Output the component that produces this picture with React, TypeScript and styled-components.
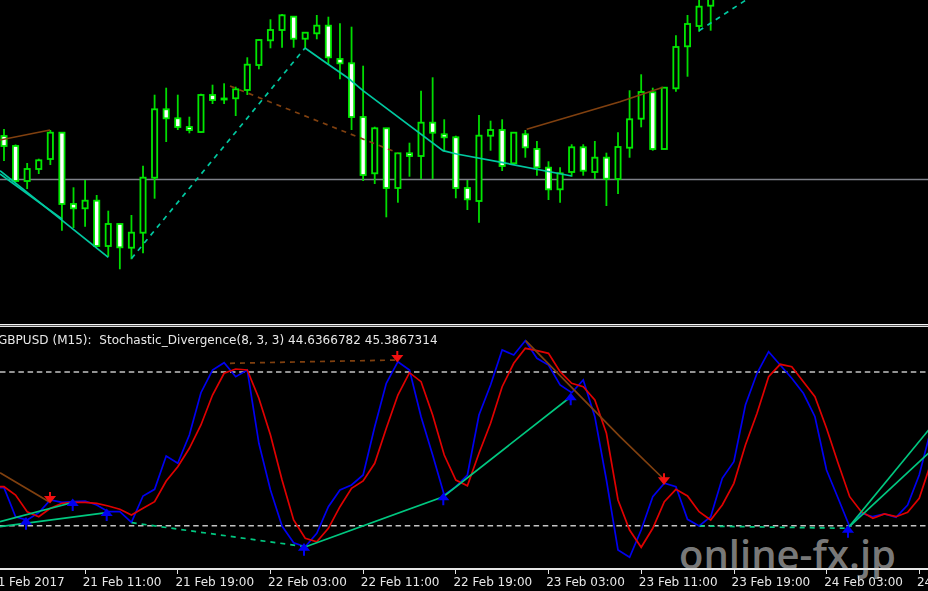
import React, {FC} from 'react';
import styled, {createGlobalStyle} from 'styled-components';

const GlobalStyle = createGlobalStyle`
	html, body {
		margin: 0;
		padding: 0;
		background: #000;
	}
`;

const StyledPage = styled.div`
	position: relative;
	display: flex;
	flex-direction: column;
	width: 928px;
	height: 591px;
	background: #000;
	overflow: hidden;
	font-family: 'DejaVu Sans', Verdana, sans-serif;
`;

const StyledChart = styled.svg`
	display: block;
	width: 928px;
	flex: none;
	filter: blur(0.35px);
`;

const StyledSeparator = styled.div`
	flex: none;
	height: 1px;
	margin-top: 1px;
	border-top: 1px solid #f4f4f4;
	border-bottom: 1px solid #e4e4e4;
	background: #555;
`;

const StyledIndicatorPanel = styled.div`
	position: relative;
	flex: none;
	height: 241px;
`;

const StyledIndicatorLabel = styled.div`
	position: absolute;
	top: 6px;
	left: -2px;
	font-size: 12px;
	line-height: 14px;
	letter-spacing: 0.03px;
	color: #e8e8e8;
	white-space: pre;
	filter: blur(0.3px);
`;

const StyledTimeAxis = styled.div`
	display: flex;
	flex: 1;
	margin-left: -8px;
	border-top: 2px solid #e6e6e6;
`;

const StyledTimeCell = styled.div`
	position: relative;
	flex: none;
	width: 92.7px;
	padding-top: 5px;
	font-size: 12px;
	line-height: 15px;
	color: #e8e8e8;
	white-space: nowrap;
	filter: blur(0.3px);

	&::before {
		content: '';
		position: absolute;
		top: 0;
		left: 0;
		width: 1px;
		height: 4px;
		background: #e6e6e6;
	}

	span {
		margin-left: -2px;
	}
`;

const StyledWatermark = styled.div`
	position: absolute;
	left: 679px;
	top: 529px;
	font-family: 'Open Sans', sans-serif;
	font-size: 40px;
	font-weight: 600;
	line-height: 50px;
	color: rgba(215, 215, 215, 0.58);
	white-space: nowrap;
`;

const StyledWick = styled.line`
	stroke: #00dc00;
	stroke-width: 1.8;
`;

const StyledBody = styled.rect<{$filled: boolean}>`
	fill: ${({$filled}) => ($filled ? '#fff' : '#000')};
	stroke: #00e800;
	stroke-width: 1.8;
`;

const StyledTrend = styled.polyline<{$color: string; $dashed?: boolean; $width?: number}>`
	fill: none;
	stroke: ${({$color}) => $color};
	stroke-width: ${({$width}) => $width ?? 1.7};
	stroke-dasharray: ${({$dashed}) => ($dashed ? '5 5' : 'none')};
`;

const StyledLevel = styled.line<{$color: string; $dashed?: boolean}>`
	stroke: ${({$color}) => $color};
	stroke-width: 1.6;
	stroke-dasharray: ${({$dashed}) => ($dashed ? '5.5 3.7' : 'none')};
`;

const StyledArrow = styled.path<{$color: string}>`
	fill: ${({$color}) => $color};
	stroke: ${({$color}) => $color};
	stroke-width: 2;
`;

const TEAL = '#00c8a0';
const BROWN = '#80400f';
const GREEN = '#00c880';
const BLUE = '#0000f0';
const RED = '#e00000';

const barX = (i: number) => 4 + i * 11.585;

// wick top, body top, body bottom, wick bottom, filled
type Candle = [number, number, number, number, boolean];

const candles: Candle[] = [
	[129, 136, 146, 161, true],
	[144.5, 146, 181, 182, true],
	[163, 169, 181, 189, false],
	[158.7, 160.3, 169, 174, false],
	[130, 132.7, 159, 165, false],
	[132.7, 132.7, 204, 230.7, true],
	[187.3, 204, 208.3, 228, true],
	[180, 200.7, 208.3, 226.7, false],
	[195, 200.7, 246, 246, true],
	[210.7, 224, 246, 256.7, false],
	[224, 224, 247.3, 269.3, true],
	[215, 232.7, 247.7, 259.3, false],
	[165.7, 177.7, 232.7, 253.3, false],
	[94.7, 109.3, 177.7, 198.7, false],
	[87.7, 109.3, 118.3, 142, true],
	[94.7, 118.3, 127, 130, true],
	[116.7, 127, 130, 133.3, true],
	[93.7, 95, 132, 132.7, false],
	[84.7, 95, 100, 104, true],
	[83.3, 98.5, 99.5, 104, true],
	[86.7, 89.3, 98.3, 116, false],
	[57.3, 64.7, 90, 95, false],
	[39.3, 40, 65, 69.3, false],
	[19.3, 30, 40.3, 48.3, false],
	[14, 15.3, 30, 47.7, false],
	[16, 16.7, 38.7, 47.7, true],
	[32.3, 32.7, 38.7, 48.3, false],
	[15, 25.7, 33.3, 39.3, false],
	[16.7, 25.7, 57.3, 65, true],
	[23.3, 59, 63.3, 79.3, true],
	[26.7, 63.3, 117, 130, true],
	[65.7, 117, 175, 181, true],
	[126.7, 128.3, 173.3, 184, false],
	[128.3, 128.3, 188, 217.3, true],
	[152.7, 153.3, 188, 202.7, false],
	[142.7, 153.3, 156, 176.7, true],
	[90.7, 122.7, 156, 179, false],
	[77.3, 122.7, 132.7, 179, true],
	[119.3, 134.3, 137.3, 151.7, true],
	[135.7, 137.3, 188, 198.3, true],
	[180, 188, 199.3, 210, true],
	[115, 135.7, 201, 222.7, false],
	[120.7, 130, 135.7, 150.7, false],
	[119.3, 130, 166, 171, true],
	[132.7, 132.7, 163.3, 165, false],
	[130, 134.3, 147.3, 157.7, true],
	[141, 149, 167.3, 175.7, true],
	[161.3, 167.7, 189.3, 200, true],
	[167.3, 173.3, 189.3, 202.7, false],
	[144.3, 147.3, 172, 176.7, false],
	[144.3, 147.3, 170.7, 175.7, true],
	[141, 157.7, 172, 179, false],
	[152.7, 157.7, 178.7, 206, true],
	[132.3, 147, 179, 194, false],
	[90.3, 119.3, 147.7, 157.7, false],
	[74.3, 92, 118.7, 127.3, false],
	[87.7, 92.3, 149, 150.7, true],
	[87.3, 87.7, 149, 149, false],
	[35.3, 47, 88.3, 91.7, false],
	[15, 24, 46.3, 76.7, false],
	[-5, 6.7, 26, 31.7, false],
	[-10, -5, 5.7, 30.7, false]
];

const mainLine = [
	487.7, 516.7, 520, 512.7, 500, 502.3, 501.7, 501, 505, 511.7, 511.7, 522.3, 496, 489.3,
	456, 463.3, 435, 392.7, 370, 362.7, 376.7, 370, 443.3, 490, 526, 542.7, 546.7, 533.3,
	506.7, 490, 485, 475, 426.7, 383.3, 361.7, 370, 416.7, 455, 495, 486.7, 475, 415,
	385, 350, 355, 340.7, 358.3, 365, 385, 392.7, 380, 416.7, 480, 550, 557.3, 530,
	496.7, 483.3, 486.7, 519.3, 526, 516.7, 478.3, 461.7, 405, 373.3, 351.7, 365, 378.3,
	393.3, 416.7, 470, 498.3, 526.7, 513.3, 516.7, 514, 517.3, 505, 475, 430
];

const signalLine = [
	486.7, 495, 511.7, 516.7, 508.3, 503.3, 502.3, 502.3, 503.3, 506, 509.3, 515, 508.3,
	501.7, 481, 466.7, 448.3, 425, 395, 373.3, 369, 370, 398.3, 435, 480, 520, 538.3,
	541.7, 528.3, 506.7, 488.3, 481, 463.3, 428.3, 395, 372.7, 381.7, 415, 455, 480,
	485.7, 453.3, 423.3, 386.7, 363.3, 348.3, 350.7, 353.3, 371.7, 383.3, 386.7, 400,
	433.3, 500, 530, 547.3, 528.3, 501.7, 489.3, 496, 511.7, 520, 505, 483.3, 445,
	413.3, 376.7, 364.3, 366.7, 381.7, 396.7, 428.3, 463.3, 496.7, 511.7, 518.3, 514,
	516.7, 512.3, 498.3, 463.3
];

const toPoints = (values: number[]) =>
	values.map((y, i) => `${barX(i)},${y}`).join(' ');

const upArrows = [
	[26, 522.7],
	[72.7, 504],
	[106.7, 514],
	[304, 548.7],
	[443.3, 498.3],
	[570.7, 398.3],
	[848, 530.7]
];

const downArrows = [
	[50, 498],
	[397.3, 357],
	[664, 479.3]
];

const timeLabels = [
	'21 Feb 2017',
	'21 Feb 11:00',
	'21 Feb 19:00',
	'22 Feb 03:00',
	'22 Feb 11:00',
	'22 Feb 19:00',
	'23 Feb 03:00',
	'23 Feb 11:00',
	'23 Feb 19:00',
	'24 Feb 03:00',
	'24 Feb 11:00'
];

const PriceChart: FC = () => (
	<StyledChart height={323} viewBox='0 0 928 323'>
		<StyledLevel $color='#7e8088' x1={0} y1={179.5} x2={928} y2={179.5} />
		{candles.map(([wickTop, bodyTop, bodyBottom, wickBottom, filled], i) => (
			<g key={i}>
				<StyledWick x1={barX(i)} y1={wickTop} x2={barX(i)} y2={wickBottom} />
				<StyledBody
					$filled={filled}
					x={barX(i) - 2.6}
					y={bodyTop}
					width={5.2}
					height={bodyBottom - bodyTop}
				/>
			</g>
		))}
		<StyledTrend $color={BROWN} points='0,140 50,130' />
		<StyledTrend $color={BROWN} $dashed points='230,86 398,153' />
		<StyledTrend $color={BROWN} points='526.7,129.3 620,101.7 663,87.3' />
		<StyledTrend $color={TEAL} points='0,170.7 108.3,257.3' />
		<StyledTrend $color={TEAL} points='0,174 62,219' />
		<StyledTrend $color={TEAL} $dashed points='131.5,258.5 305,48' />
		<StyledTrend
			$color={TEAL}
			points='305,48 326.7,63.3 348,78 363,90.7 443,150.7 456.7,154 503,162.7 571.7,176'
		/>
		<StyledTrend $color={TEAL} $dashed points='699,30.7 746,0' />
	</StyledChart>
);

const StochasticChart: FC = () => (
	<StyledChart height={241} viewBox='0 327 928 241'>
		<StyledLevel $color='#c4c4c4' $dashed x1={0} y1={372} x2={928} y2={372} />
		<StyledLevel $color='#c4c4c4' $dashed x1={0} y1={525.7} x2={928} y2={525.7} />
		<StyledTrend $color={BLUE} $width={1.7} points={`-8,487.7 ${toPoints(mainLine)}`} />
		<StyledTrend $color={RED} $width={1.7} points={`-8,486.7 ${toPoints(signalLine)}`} />
		<StyledTrend $color={BROWN} points='0,472.7 49,501.7' />
		<StyledTrend $color={BROWN} $dashed points='230,363.3 396.7,360' />
		<StyledTrend $color={BROWN} points='525.7,340.7 620,436.7 664.7,480' />
		<StyledTrend $color={GREEN} points='0,521.7 71.7,502.7' />
		<StyledTrend $color={GREEN} points='0,526.7 106.7,512.7' />
		<StyledTrend $color={GREEN} $dashed points='131.7,522.7 305,546.7' />
		<StyledTrend $color={GREEN} points='305,547 443.3,496.7 571.7,396' />
		<StyledTrend $color={GREEN} $dashed points='699.7,526 848,528.3' />
		<StyledTrend $color={GREEN} points='848,528 930,428.3' />
		<StyledTrend $color={GREEN} points='848,528 930,451.7' />
		{upArrows.map(([x, y]) => (
			<StyledArrow
				key={x}
				$color={BLUE}
				d={`M${x} ${y + 7}V${y - 1}M${x - 4} ${y + 1}L${x} ${y - 4}L${x + 4} ${y + 1}Z`}
			/>
		))}
		{downArrows.map(([x, y]) => (
			<StyledArrow
				key={x}
				$color='#f01010'
				d={`M${x} ${y - 6}V${y + 1}M${x - 4} ${y - 1}L${x} ${y + 4}L${x + 4} ${y - 1}Z`}
			/>
		))}
	</StyledChart>
);

const App: FC = () => (
	<StyledPage>
		<GlobalStyle />
		<PriceChart />
		<StyledSeparator />
		<StyledIndicatorPanel>
			<StochasticChart />
			<StyledIndicatorLabel>
				{'GBPUSD (M15):  Stochastic_Divergence(8, 3, 3) 44.6366782 45.3867314'}
			</StyledIndicatorLabel>
		</StyledIndicatorPanel>
		<StyledTimeAxis>
			{timeLabels.map((label) => (
				<StyledTimeCell key={label}>
					<span>{label}</span>
				</StyledTimeCell>
			))}
		</StyledTimeAxis>
		<StyledWatermark>online-fx.jp</StyledWatermark>
	</StyledPage>
);

export default App;
